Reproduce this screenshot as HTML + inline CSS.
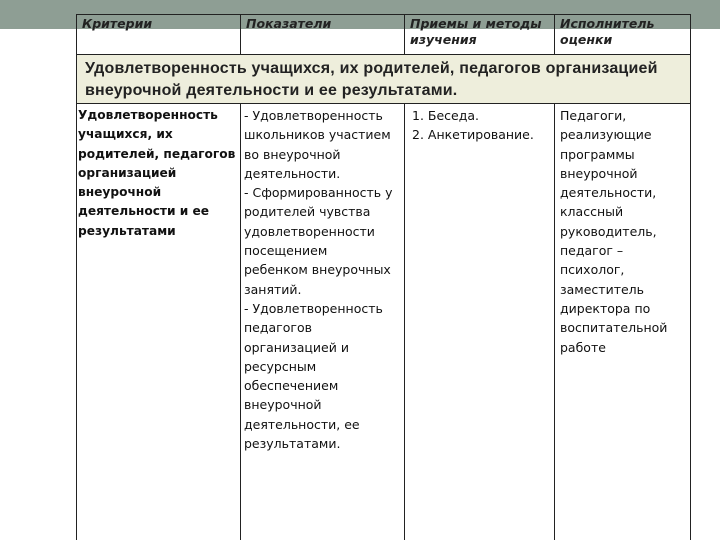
<!DOCTYPE html>
<html><head><meta charset="utf-8"><style>
body{margin:0;width:720px;height:540px;background:#fff;position:relative;overflow:hidden;font-family:"DejaVu Sans","Liberation Sans",sans-serif;color:#111}
.bar{position:absolute;left:0;top:0;width:720px;height:29px;background:#8e9e94}
.v{position:absolute;top:14px;bottom:0;width:1px;background:#222}
.h{position:absolute;left:76px;width:615px;height:1px;background:#222}
.t{position:absolute;font-size:12.5px;line-height:19.3px;white-space:nowrap}
.hd{position:absolute;font-style:italic;font-size:12.5px;line-height:16px;font-weight:bold;color:#222}
.ban{position:absolute;left:77px;top:55px;width:613px;height:48px;background:#eeeedc}
.bt{position:absolute;left:85px;top:58px;font-family:"Liberation Sans",sans-serif;font-size:16px;font-weight:bold;line-height:22px;white-space:nowrap;color:#222;letter-spacing:0.2px}
</style></head><body>
<div class="bar"></div>
<div class="ban"></div>
<div class="h" style="top:14px"></div>
<div class="h" style="top:54px"></div>
<div class="h" style="top:103px"></div>
<div class="v" style="left:76px"></div>
<div class="v" style="left:240px;top:14px;height:40px"></div>
<div class="v" style="left:240px;top:103px"></div>
<div class="v" style="left:404px;top:14px;height:40px"></div>
<div class="v" style="left:404px;top:103px"></div>
<div class="v" style="left:554px;top:14px;height:40px"></div>
<div class="v" style="left:554px;top:103px"></div>
<div class="v" style="left:690px"></div>
<div class="hd" style="left:82px;top:16px">Критерии</div>
<div class="hd" style="left:246px;top:16px">Показатели</div>
<div class="hd" style="left:410px;top:16px">Приемы и методы<br>изучения</div>
<div class="hd" style="left:560px;top:16px">Исполнитель<br>оценки</div>
<div class="bt">Удовлетворенность учащихся, их родителей, педагогов организацией<br>внеурочной деятельности и ее результатами.</div>
<div class="t" style="left:78px;top:106px;font-weight:bold;font-size:12.2px">Удовлетворенность<br>учащихся, их<br>родителей, педагогов<br>организацией<br>внеурочной<br>деятельности и ее<br>результатами</div>
<div class="t" style="left:244px;top:106px">- Удовлетворенность<br>школьников участием<br>во внеурочной<br>деятельности.<br>- Сформированность у<br>родителей чувства<br>удовлетворенности<br>посещением<br>ребенком внеурочных<br>занятий.<br>- Удовлетворенность<br>педагогов<br>организацией и<br>ресурсным<br>обеспечением<br>внеурочной<br>деятельности, ее<br>результатами.</div>
<div class="t" style="left:412px;top:106px">1. Беседа.<br>2. Анкетирование.</div>
<div class="t" style="left:560px;top:106px">Педагоги,<br>реализующие<br>программы<br>внеурочной<br>деятельности,<br>классный<br>руководитель,<br>педагог –<br>психолог,<br>заместитель<br>директора по<br>воспитательной<br>работе</div>
</body></html>
